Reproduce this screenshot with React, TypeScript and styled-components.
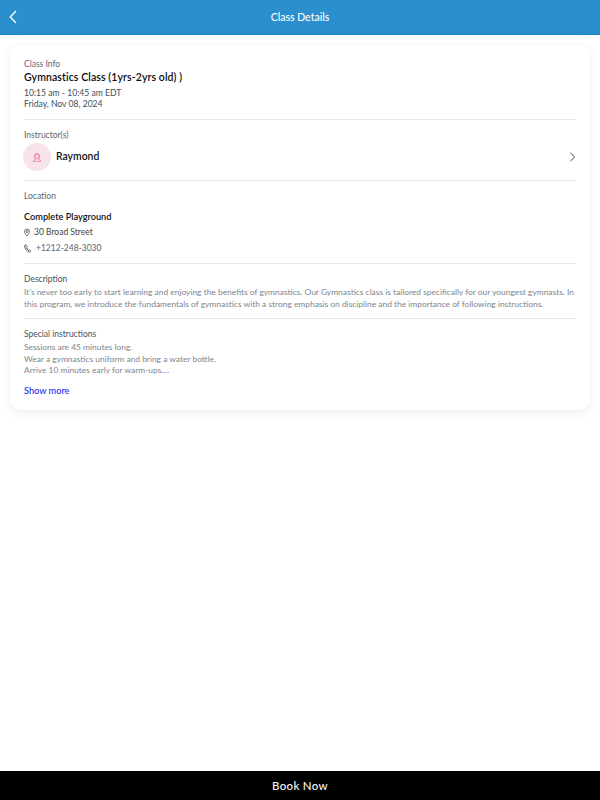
import React from "react";
import styled, { createGlobalStyle } from "styled-components";

const GlobalStyle = createGlobalStyle`
  html, body { margin: 0; padding: 0; background: #fff; }
  body { font-family: Lato, "Noto Sans", sans-serif; }
`;

const Page = styled.div`
  width: 600px;
  height: 800px;
  display: flex;
  flex-direction: column;
  overflow: hidden;
`;

const Header = styled.header`
  height: 34px;
  flex: none;
  display: flex;
  align-items: center;
  justify-content: center;
  position: relative;
  background: #2b8ecd;
  border-bottom: 1px solid #1482c5;
  color: #fff;
  font-size: 10.5px;
  font-weight: 500;
`;

const BackButton = styled.span`
  position: absolute;
  left: 8px;
  top: 10px;
  display: flex;
`;

const Content = styled.main`
  flex: 1;
  padding: 10px 10px 0;
`;

const Card = styled.section`
  height: 365px;
  box-sizing: border-box;
  padding: 14px 14px 0;
  background: #fff;
  border-radius: 11px;
  box-shadow: 0 2px 10px rgba(40, 50, 70, 0.09);
`;

const Section = styled.div<{ $gap?: number }>`
  border-bottom: 1px solid #e8e8e8;
  padding-bottom: ${(p) => p.$gap ?? 9}px;
  margin-bottom: 10px;
  &:last-child { border-bottom: 0; margin-bottom: 0; }
`;

const Label = styled.div<{ $dark?: boolean }>`
  font-size: 8.5px;
  line-height: 11px;
  color: ${(p) => (p.$dark ? "#4a5058" : "#60666e")};
`;

const Title = styled.div`
  font-size: 10.5px;
  line-height: 13px;
  margin-top: 1px;
  margin-bottom: 4px;
  font-weight: 600;
  letter-spacing: 0.1px;
  color: #0c0c10;
`;

const TimeText = styled.div`
  font-size: 8.6px;
  line-height: 11px;
  color: #3d4d5c;
`;

const InstructorRow = styled.div`
  display: flex;
  align-items: center;
  margin: 2px -1px 0 -1px;
`;

const Avatar = styled.div`
  width: 28px;
  height: 28px;
  border-radius: 50%;
  background: #f9e3ea;
  display: flex;
  align-items: center;
  justify-content: center;
  margin-right: 5px;
`;

const Name = styled.div`
  flex: 1;
  font-size: 10.4px;
  font-weight: 600;
  color: #111;
  margin-bottom: 2px;
`;

const Chevron = styled.span`
  display: flex;
`;

const PlaceName = styled.div`
  font-size: 9.2px;
  line-height: 12px;
  font-weight: 600;
  color: #111;
  margin-top: 9px;
  margin-bottom: 1px;
`;

const ContactRow = styled.div<{ $muted?: boolean }>`
  display: flex;
  align-items: center;
  gap: 4px;
  height: 16px;
  font-size: 8.5px;
  color: ${(p) => (p.$muted ? "#5c646c" : "#3d444c")};
`;

const Body = styled.div`
  font-size: 8.42px;
  line-height: 11.6px;
  color: #7d848c;
  margin-top: 2px;
`;

const ShowMore = styled.a`
  display: block;
  margin-top: 8px;
  font-size: 9.2px;
  line-height: 12px;
  color: #1a2cf0;
  font-weight: 500;
`;

const BookBar = styled.button`
  height: 29px;
  flex: none;
  border: 0;
  padding: 0;
  background: #000;
  color: #f2f2f2;
  font-family: inherit;
  font-size: 11.5px;
  font-weight: 500;
  letter-spacing: 0.3px;
`;

export default function App() {
  return (
    <Page>
      <GlobalStyle />
      <Header>
        <BackButton>
          <svg width="10" height="14" viewBox="0 0 10 14" fill="none" stroke="#fff" strokeWidth="1.3">
            <path d="M8 1 2.2 7 8 13" />
          </svg>
        </BackButton>
        Class Details
      </Header>
      <Content>
        <Card>
          <Section>
            <Label>Class Info</Label>
            <Title>Gymnastics Class (1yrs-2yrs old) )</Title>
            <TimeText>10:15 am - 10:45 am EDT</TimeText>
            <TimeText>Friday, Nov 08, 2024</TimeText>
          </Section>
          <Section>
            <Label>Instructor(s)</Label>
            <InstructorRow>
              <Avatar>
                <svg width="10" height="11" viewBox="0 0 13 13" fill="none" stroke="#e8607f" strokeWidth="0.8">
                  <circle cx="6.5" cy="5" r="2.6" />
                  <path d="M3.2 7.6C2.6 5.2 2.8 1.4 6.5 1.4s3.9 3.8 3.3 6.2" />
                  <path d="M5 7.4 4.6 9 1.8 10.4v1.2h9.4v-1.2L8.4 9 8 7.4" />
                </svg>
              </Avatar>
              <Name>Raymond</Name>
              <Chevron>
                <svg width="8" height="10" viewBox="0 0 8 10" fill="none" stroke="#33465a" strokeWidth="1">
                  <path d="M1.5 1 5.7 5 1.5 9" />
                </svg>
              </Chevron>
            </InstructorRow>
          </Section>
          <Section $gap={7}>
            <Label>Location</Label>
            <PlaceName>Complete Playground</PlaceName>
            <ContactRow>
              <svg width="6" height="9" viewBox="0 0 7 9" fill="none" stroke="#333" strokeWidth="0.8">
                <path d="M3.5 8.5C1.8 6.5.6 5.1.6 3.4a2.9 2.9 0 0 1 5.8 0c0 1.7-1.2 3.1-2.9 5.1Z" />
                <circle cx="3.5" cy="3.4" r="1.1" />
              </svg>
              30 Broad Street
            </ContactRow>
            <ContactRow $muted>
              <svg width="8" height="9" viewBox="0 0 8 9" fill="none" stroke="#333" strokeWidth="0.8">
                <path d="M1.8.8.6 1.6c-.2 2.6 2.2 6 5 6.6l1.2-1.3L5.3 5.6l-1 .6C3.4 5.6 2.8 4.6 2.6 3.6l.8-.8Z" />
              </svg>
              +1212-248-3030
            </ContactRow>
          </Section>
          <Section $gap={8}>
            <Label $dark>Description</Label>
            <Body>
              It's never too early to start learning and enjoying the benefits of gymnastics. Our Gymnastics class is tailored specifically for our youngest gymnasts. In this program, we introduce the fundamentals of gymnastics with a strong emphasis on discipline and the importance of following instructions.
            </Body>
          </Section>
          <Section>
            <Label $dark>Special instructions</Label>
            <Body>
              Sessions are 45 minutes long.<br />
              Wear a gymnastics uniform and bring a water bottle.<br />
              Arrive 10 minutes early for warm-ups....
            </Body>
            <ShowMore>Show more</ShowMore>
          </Section>
        </Card>
      </Content>
      <BookBar>Book Now</BookBar>
    </Page>
  );
}
